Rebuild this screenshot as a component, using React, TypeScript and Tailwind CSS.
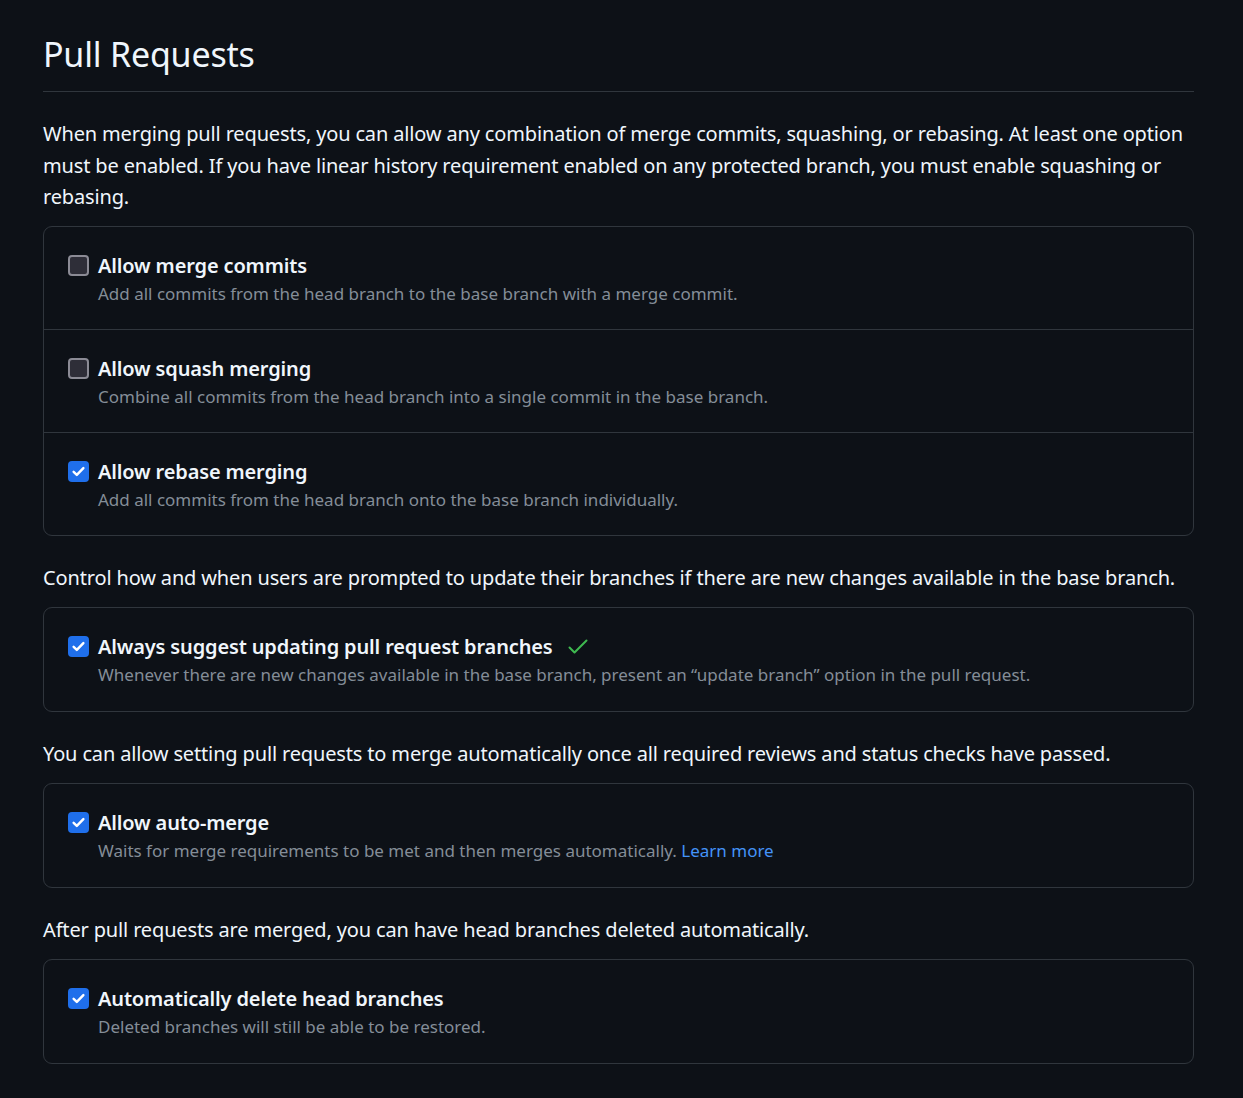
import React from "react";

const font = { fontFamily: '"Noto Sans", "Open Sans", sans-serif' };

function CheckBox({ checked }: { checked: boolean }) {
  if (checked) {
    return (
      <span className="mt-[4px] flex h-[21px] w-[21px] shrink-0 items-center justify-center rounded-[4px] bg-[#1f6feb]">
        <svg width="15" height="15" viewBox="0 0 16 16" fill="none">
          <path d="M2.8 8.4 L6.2 11.6 L13.2 4.4" stroke="#ffffff" strokeWidth="2.6" strokeLinecap="round" strokeLinejoin="round" />
        </svg>
      </span>
    );
  }
  return <span className="mt-[4px] block h-[21px] w-[21px] shrink-0 rounded-[4px] border-[2.5px] border-[#8b8b95] bg-[#2e2e38]" />;
}

function Row({
  title,
  desc,
  checked,
  extra,
  border,
  single,
}: {
  title: string;
  desc: React.ReactNode;
  checked: boolean;
  extra?: React.ReactNode;
  border?: boolean;
  single?: boolean;
}) {
  return (
    <div
      className={`flex gap-[9px] px-[24px] pt-[24px] ${single ? "pb-[23px]" : "pb-[22px]"} ${
        border ? "border-t border-[#30363d]" : ""
      }`}
    >
      <CheckBox checked={checked} />
      <div className="flex flex-col">
        <div className="flex items-center gap-[15px]">
          <span className="text-[20px] font-semibold leading-[30px] tracking-[-0.15px] text-[#f0f6fc]">{title}</span>
          {extra}
        </div>
        <div className="text-[17px] leading-[26px] text-[#848d97]">{desc}</div>
      </div>
    </div>
  );
}

function Box({ children }: { children: React.ReactNode }) {
  return <div className="rounded-[9px] border border-[#30363d]">{children}</div>;
}

function Para({ children }: { children: React.ReactNode }) {
  return <p className="mt-[26.5px] mb-[13px] text-[20px] leading-[31.5px] tracking-[-0.15px]">{children}</p>;
}

export default function App() {
  return (
    <div className="min-h-[1098px] bg-[#0d1117] px-[43px] pt-[30px] text-[#f0f6fc]" style={font}>
      <div className="w-[1151px]">
        <h2 className="border-b border-[#30363d] pb-[12px] text-[34px] font-normal leading-[49px] tracking-[-0.2px]">Pull Requests</h2>
        <p className="mt-[26px] mb-[13px] text-[20px] leading-[31.5px] tracking-[-0.15px]">
          When merging pull requests, you can allow any combination of merge commits, squashing, or rebasing. At least one option must be enabled. If you have linear history requirement enabled on any protected branch, you must enable squashing or rebasing.
        </p>
        <Box>
          <Row checked={false} title="Allow merge commits" desc="Add all commits from the head branch to the base branch with a merge commit." />
          <Row border checked={false} title="Allow squash merging" desc="Combine all commits from the head branch into a single commit in the base branch." />
          <Row border checked title="Allow rebase merging" desc="Add all commits from the head branch onto the base branch individually." />
        </Box>
        <Para>Control how and when users are prompted to update their branches if there are new changes available in the base branch.</Para>
        <Box>
          <Row
            single
            checked
            title="Always suggest updating pull request branches"
            extra={
              <svg width="20" height="16" viewBox="0 0 20 16" fill="none">
                <path d="M1.5 8.5 L6.5 13.5 L18.5 1.5" stroke="#3fb950" strokeWidth="2" strokeLinecap="round" strokeLinejoin="round" />
              </svg>
            }
            desc="Whenever there are new changes available in the base branch, present an “update branch” option in the pull request."
          />
        </Box>
        <Para>You can allow setting pull requests to merge automatically once all required reviews and status checks have passed.</Para>
        <Box>
          <Row
            single
            checked
            title="Allow auto-merge"
            desc={
              <>
                Waits for merge requirements to be met and then merges automatically.{" "}
                <span className="text-[#4493f8]">Learn more</span>
              </>
            }
          />
        </Box>
        <Para>After pull requests are merged, you can have head branches deleted automatically.</Para>
        <Box>
          <Row single checked title="Automatically delete head branches" desc="Deleted branches will still be able to be restored." />
        </Box>
      </div>
    </div>
  );
}
